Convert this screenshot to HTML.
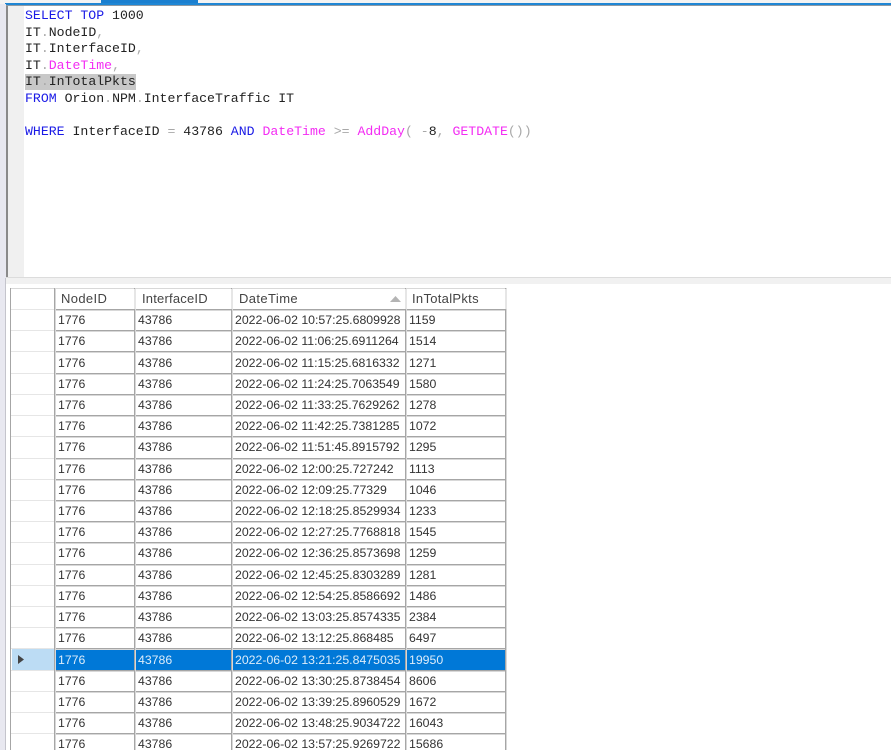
<!DOCTYPE html>
<html><head><meta charset="utf-8"><style>
html,body{margin:0;padding:0;background:#fff}
#p{position:relative;width:891px;height:750px;overflow:hidden;background:#fff}
.a{position:absolute}
pre{position:absolute;left:25px;margin:0;font:13.2px/16.6px "Liberation Mono",monospace;color:#222;white-space:pre;filter:blur(.25px)}
.k{color:#1a1ae6}.f{color:#f32cf3}.g{color:#a8a8a8}
.r{position:absolute;left:12px;width:494px;height:21px;font:12.3px/21px "Liberation Sans",sans-serif;color:#333;filter:blur(.2px)}
.r span{position:absolute;top:1px;white-space:nowrap}
.r .c1{left:46px}.r .c2{left:126px}.r .c3{left:223px}.r .c4{left:397px}
.s{color:#dcecfa}
.h{position:absolute;top:288px;height:21px;font:13px/21px "Liberation Sans",sans-serif;letter-spacing:.2px;color:#444;filter:blur(.2px)}
.hl{position:absolute;left:54px;width:452px;height:1px;background:#a6a6a6;box-shadow:0 1px 0 #d8d8d8}
.hh{position:absolute;left:11px;width:43px;height:1px;background:#e6e6e6}
.v{position:absolute;top:288px;height:462px;width:1px;background:#a6a6a6;box-shadow:1px 0 0 #d8d8d8}
</style></head><body><div id="p">
<div class="a" style="left:0;top:0;width:891px;height:4px;background:#f3f3f3"></div>
<div class="a" style="left:101px;top:0;width:97px;height:4px;background:#1b7fcf"></div>
<div class="a" style="left:5px;top:3px;width:886px;height:2px;background:#1f86d4"></div>
<div class="a" style="left:5px;top:5px;width:886px;height:1px;background:#8f9aa3"></div>
<div class="a" style="left:0;top:4px;width:6px;height:746px;background:#e8e8f0"></div>
<div class="a" style="left:6px;top:6px;width:2px;height:272px;background:#8a8a8a"></div>
<div class="a" style="left:8px;top:6px;width:16px;height:271px;background:#f0f0f0"></div>
<div class="a" style="left:6px;top:277px;width:885px;height:1px;background:#dcdcdc"></div>
<div class="a" style="left:6px;top:278px;width:885px;height:6px;background:#f1f1f1"></div>
<div class="a" style="left:5px;top:278px;width:1px;height:472px;background:#c4c4cc"></div>

<div class="a" style="left:25px;top:74px;width:111px;height:16px;background:#c8c8c8"></div>
<pre style="top:8px"><span class="k">SELECT TOP</span> 1000</pre>
<pre style="top:24.6px">IT<span class="g">.</span>NodeID<span class="g">,</span></pre>
<pre style="top:41.2px">IT<span class="g">.</span>InterfaceID<span class="g">,</span></pre>
<pre style="top:57.8px">IT<span class="g">.</span><span class="f">DateTime</span><span class="g">,</span></pre>
<pre style="top:74.4px">IT<span class="g">.</span>InTotalPkts</pre>
<pre style="top:91px"><span class="k">FROM</span> Orion<span class="g">.</span>NPM<span class="g">.</span>InterfaceTraffic IT</pre>
<pre style="top:124.2px"><span class="k">WHERE</span> InterfaceID <span class="g">=</span> 43786 <span class="k">AND</span> <span class="f">DateTime</span> <span class="g">&gt;=</span> <span class="f">AddDay</span><span class="g">(</span> <span class="g">-</span>8<span class="g">,</span> <span class="f">GETDATE</span><span class="g">())</span></pre>

<div class="a" style="left:12px;top:649px;width:42px;height:21px;background:#bcdcf4"></div>
<div class="a" style="left:54px;top:649px;width:451px;height:21px;background:#0078d7"></div>
<svg class="a" style="left:16px;top:654px" width="9" height="11"><path d="M2 1L8 5.5L2 10Z" fill="#444"/></svg>

<div class="a" style="left:10px;top:288px;width:496px;height:1px;background:#d8d8d8"></div>
<div class="a" style="left:10px;top:288px;width:1px;height:462px;background:#a6a6a6"></div>
<div class="hl" style="top:309px"></div><div class="hh" style="top:309px"></div>
<div class="hl" style="top:330px"></div><div class="hh" style="top:330px"></div>
<div class="hl" style="top:351px"></div><div class="hh" style="top:351px"></div>
<div class="hl" style="top:373px"></div><div class="hh" style="top:373px"></div>
<div class="hl" style="top:394px"></div><div class="hh" style="top:394px"></div>
<div class="hl" style="top:415px"></div><div class="hh" style="top:415px"></div>
<div class="hl" style="top:436px"></div><div class="hh" style="top:436px"></div>
<div class="hl" style="top:458px"></div><div class="hh" style="top:458px"></div>
<div class="hl" style="top:479px"></div><div class="hh" style="top:479px"></div>
<div class="hl" style="top:500px"></div><div class="hh" style="top:500px"></div>
<div class="hl" style="top:521px"></div><div class="hh" style="top:521px"></div>
<div class="hl" style="top:542px"></div><div class="hh" style="top:542px"></div>
<div class="hl" style="top:564px"></div><div class="hh" style="top:564px"></div>
<div class="hl" style="top:585px"></div><div class="hh" style="top:585px"></div>
<div class="hl" style="top:606px"></div><div class="hh" style="top:606px"></div>
<div class="hl" style="top:627px"></div><div class="hh" style="top:627px"></div>
<div class="hl" style="top:648px"></div><div class="hh" style="top:648px"></div>
<div class="hl" style="top:670px"></div><div class="hh" style="top:670px"></div>
<div class="hl" style="top:691px"></div><div class="hh" style="top:691px"></div>
<div class="hl" style="top:712px"></div><div class="hh" style="top:712px"></div>
<div class="hl" style="top:733px"></div><div class="hh" style="top:733px"></div>
<div class="v" style="left:54px"></div>
<div class="v" style="left:134px"></div>
<div class="v" style="left:231px"></div>
<div class="v" style="left:405px"></div>
<div class="v" style="left:505px"></div>
<div class="a" style="left:134px;top:289px;width:2px;height:20px;background:#e6e6e6"></div>
<div class="a" style="left:231px;top:289px;width:2px;height:20px;background:#e6e6e6"></div>
<div class="a" style="left:405px;top:289px;width:2px;height:20px;background:#e6e6e6"></div>
<div class="a" style="left:505px;top:289px;width:2px;height:20px;background:#e6e6e6"></div>

<div class="h" style="left:61px;letter-spacing:.35px">NodeID</div>
<div class="h" style="left:142px">InterfaceID</div>
<div class="h" style="left:239px;letter-spacing:.4px">DateTime</div>
<div class="h" style="left:412px;letter-spacing:.3px">InTotalPkts</div>
<svg class="a" style="left:389px;top:295px" width="13" height="8"><path d="M1 7L6.5 1L12 7Z" fill="#b4b4b4"/></svg>

<div class="r" style="top:309px"><span class="c1">1776</span><span class="c2">43786</span><span class="c3">2022-06-02 10:57:25.6809928</span><span class="c4">1159</span></div>
<div class="r" style="top:330px"><span class="c1">1776</span><span class="c2">43786</span><span class="c3">2022-06-02 11:06:25.6911264</span><span class="c4">1514</span></div>
<div class="r" style="top:352px"><span class="c1">1776</span><span class="c2">43786</span><span class="c3">2022-06-02 11:15:25.6816332</span><span class="c4">1271</span></div>
<div class="r" style="top:373px"><span class="c1">1776</span><span class="c2">43786</span><span class="c3">2022-06-02 11:24:25.7063549</span><span class="c4">1580</span></div>
<div class="r" style="top:394px"><span class="c1">1776</span><span class="c2">43786</span><span class="c3">2022-06-02 11:33:25.7629262</span><span class="c4">1278</span></div>
<div class="r" style="top:415px"><span class="c1">1776</span><span class="c2">43786</span><span class="c3">2022-06-02 11:42:25.7381285</span><span class="c4">1072</span></div>
<div class="r" style="top:436px"><span class="c1">1776</span><span class="c2">43786</span><span class="c3">2022-06-02 11:51:45.8915792</span><span class="c4">1295</span></div>
<div class="r" style="top:458px"><span class="c1">1776</span><span class="c2">43786</span><span class="c3">2022-06-02 12:00:25.727242</span><span class="c4">1113</span></div>
<div class="r" style="top:479px"><span class="c1">1776</span><span class="c2">43786</span><span class="c3">2022-06-02 12:09:25.77329</span><span class="c4">1046</span></div>
<div class="r" style="top:500px"><span class="c1">1776</span><span class="c2">43786</span><span class="c3">2022-06-02 12:18:25.8529934</span><span class="c4">1233</span></div>
<div class="r" style="top:521px"><span class="c1">1776</span><span class="c2">43786</span><span class="c3">2022-06-02 12:27:25.7768818</span><span class="c4">1545</span></div>
<div class="r" style="top:542px"><span class="c1">1776</span><span class="c2">43786</span><span class="c3">2022-06-02 12:36:25.8573698</span><span class="c4">1259</span></div>
<div class="r" style="top:564px"><span class="c1">1776</span><span class="c2">43786</span><span class="c3">2022-06-02 12:45:25.8303289</span><span class="c4">1281</span></div>
<div class="r" style="top:585px"><span class="c1">1776</span><span class="c2">43786</span><span class="c3">2022-06-02 12:54:25.8586692</span><span class="c4">1486</span></div>
<div class="r" style="top:606px"><span class="c1">1776</span><span class="c2">43786</span><span class="c3">2022-06-02 13:03:25.8574335</span><span class="c4">2384</span></div>
<div class="r" style="top:627px"><span class="c1">1776</span><span class="c2">43786</span><span class="c3">2022-06-02 13:12:25.868485</span><span class="c4">6497</span></div>
<div class="r s" style="top:649px"><span class="c1">1776</span><span class="c2">43786</span><span class="c3">2022-06-02 13:21:25.8475035</span><span class="c4">19950</span></div>
<div class="r" style="top:670px"><span class="c1">1776</span><span class="c2">43786</span><span class="c3">2022-06-02 13:30:25.8738454</span><span class="c4">8606</span></div>
<div class="r" style="top:691px"><span class="c1">1776</span><span class="c2">43786</span><span class="c3">2022-06-02 13:39:25.8960529</span><span class="c4">1672</span></div>
<div class="r" style="top:712px"><span class="c1">1776</span><span class="c2">43786</span><span class="c3">2022-06-02 13:48:25.9034722</span><span class="c4">16043</span></div>
<div class="r" style="top:733px"><span class="c1">1776</span><span class="c2">43786</span><span class="c3">2022-06-02 13:57:25.9269722</span><span class="c4">15686</span></div>
</div></body></html>
